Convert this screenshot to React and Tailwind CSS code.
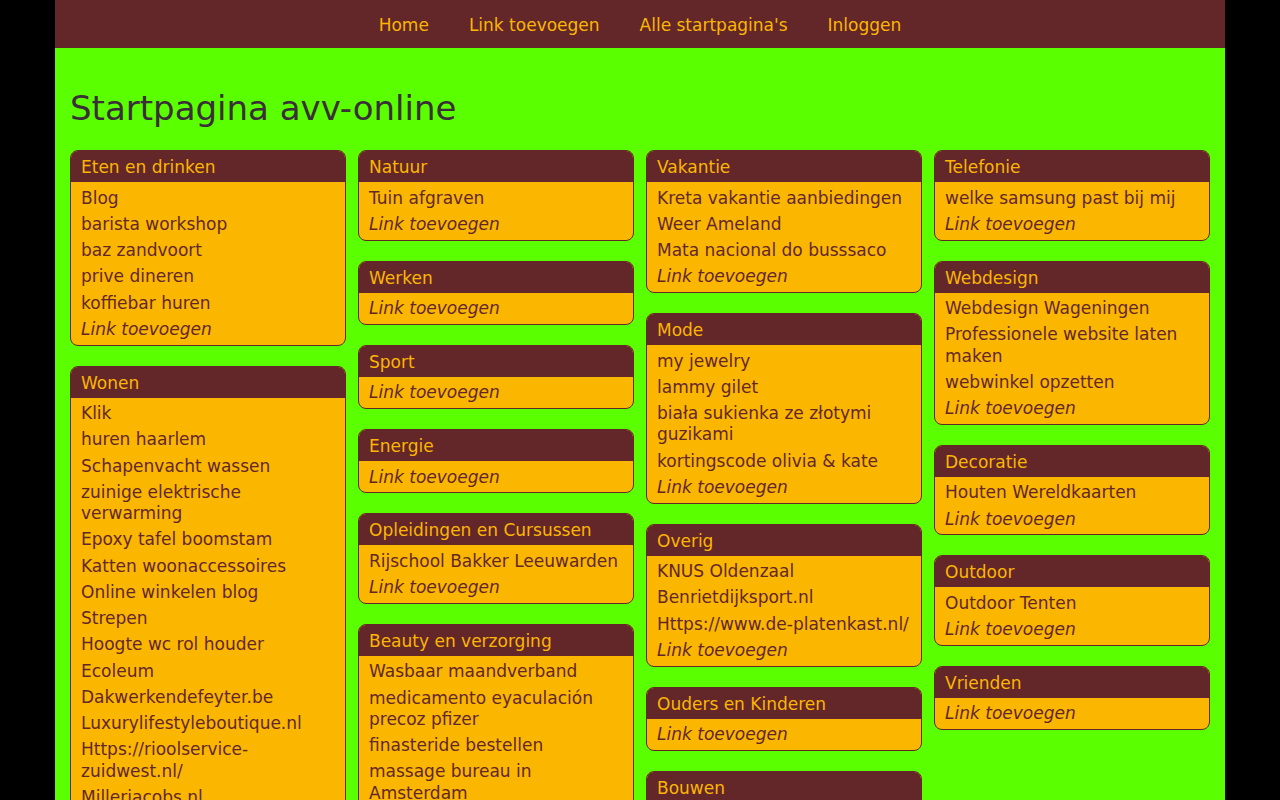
import React from "react";

const font = { fontFamily: '"DejaVu Sans", Verdana, sans-serif' };

const kolommen = [
  [
    {
      titel: "Eten en drinken",
      links: ["Blog", "barista workshop", "baz zandvoort", "prive dineren", "koffiebar huren"],
    },
    {
      titel: "Wonen",
      links: [
        "Klik",
        "huren haarlem",
        "Schapenvacht wassen",
        "zuinige elektrische verwarming",
        "Epoxy tafel boomstam",
        "Katten woonaccessoires",
        "Online winkelen blog",
        "Strepen",
        "Hoogte wc rol houder",
        "Ecoleum",
        "Dakwerkendefeyter.be",
        "Luxurylifestyleboutique.nl",
        "Https://rioolservice-zuidwest.nl/",
        "Millerjacobs.nl",
        "Tuinhuis kopen",
      ],
    },
  ],
  [
    { titel: "Natuur", links: ["Tuin afgraven"] },
    { titel: "Werken", links: [] },
    { titel: "Sport", links: [] },
    { titel: "Energie", links: [] },
    { titel: "Opleidingen en Cursussen", links: ["Rijschool Bakker Leeuwarden"] },
    {
      titel: "Beauty en verzorging",
      links: [
        "Wasbaar maandverband",
        "medicamento eyaculación precoz pfizer",
        "finasteride bestellen",
        "massage bureau in Amsterdam",
        "Wimperextensions",
      ],
    },
  ],
  [
    {
      titel: "Vakantie",
      links: ["Kreta vakantie aanbiedingen", "Weer Ameland", "Mata nacional do busssaco"],
    },
    {
      titel: "Mode",
      links: [
        "my jewelry",
        "lammy gilet",
        "biała sukienka ze złotymi guzikami",
        "kortingscode olivia & kate",
      ],
    },
    {
      titel: "Overig",
      links: ["KNUS Oldenzaal", "Benrietdijksport.nl", "Https://www.de-platenkast.nl/"],
    },
    { titel: "Ouders en Kinderen", links: [] },
    { titel: "Bouwen", links: ["Dakkapel plaatsen"] },
  ],
  [
    { titel: "Telefonie", links: ["welke samsung past bij mij"] },
    {
      titel: "Webdesign",
      links: ["Webdesign Wageningen", "Professionele website laten maken", "webwinkel opzetten"],
    },
    { titel: "Decoratie", links: ["Houten Wereldkaarten"] },
    { titel: "Outdoor", links: ["Outdoor Tenten"] },
    { titel: "Vrienden", links: [] },
  ],
];

function Blok({ titel, links }) {
  return (
    <div className="overflow-hidden rounded-lg border border-[#63272a] bg-[#fbb600]">
      <div className="bg-[#63272a] px-[10px] pt-[6px] pb-[4px] leading-[21px] text-[#fbb600]">
        {titel}
      </div>
      <ul className="px-[10px] pt-[3px] pb-[2px]">
        {links.map((l) => (
          <li key={l} className="py-[2.5px] leading-[1.25] text-[#63272a]">
            <a href="#">{l}</a>
          </li>
        ))}
        <li className="py-[2.5px] leading-[1.25] italic text-[#63272a]">
          <a href="#">Link toevoegen</a>
        </li>
      </ul>
    </div>
  );
}

export default function App() {
  return (
    <div className="min-h-screen bg-black text-[17px]" style={font}>
      <div className="mx-auto w-[1170px] bg-[#5aff00] pb-10">
        <nav className="flex h-12 items-center justify-center gap-10 bg-[#63272a] pt-1 text-[#fbb600]">
          <a href="#">Home</a>
          <a href="#">Link toevoegen</a>
          <a href="#">Alle startpagina's</a>
          <a href="#">Inloggen</a>
        </nav>
        <main className="px-[15px]">
          <h1 className="pt-[39px] pb-[21px] text-[34px] leading-[42px] text-[#3a2f38]">
            Startpagina avv-online
          </h1>
          <div className="grid grid-cols-4 items-start gap-3">
            {kolommen.map((kol, i) => (
              <div key={i} className="flex flex-col gap-5">
                {kol.map((b) => (
                  <Blok key={b.titel} {...b} />
                ))}
              </div>
            ))}
          </div>
        </main>
      </div>
    </div>
  );
}
